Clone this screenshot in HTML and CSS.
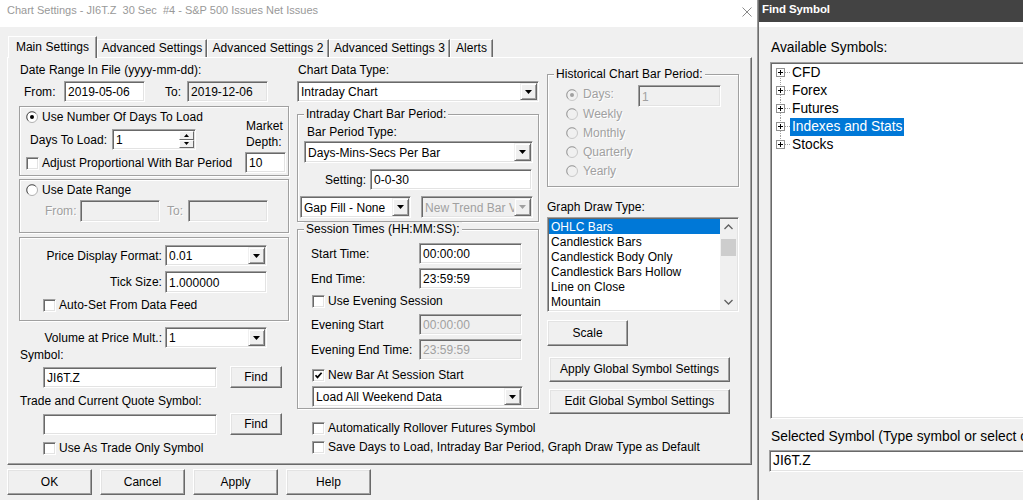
FILE: index.html
```html
<!DOCTYPE html>
<html>
<head>
<meta charset="utf-8">
<link rel="stylesheet" href="styles.css">
</head>
<body>
<div class="dlg">
  <div class="titlebar">
    <span class="ttl">Chart Settings - JI6T.Z  30 Sec  #4 - S&amp;P 500 Issues Net Issues</span>
    <svg class="xbtn" width="10" height="10" viewBox="0 0 10 10"><path d="M0.5 0.5 L9.5 9.5 M9.5 0.5 L0.5 9.5" stroke="#8a8a8a" stroke-width="1" fill="none"/></svg>
  </div>
  <div class="tabs">
    <div class="tab on t1">Main Settings</div>
    <div class="tab t2">Advanced Settings</div>
    <div class="tab t3">Advanced Settings 2</div>
    <div class="tab t4">Advanced Settings 3</div>
    <div class="tab t5">Alerts</div>
  </div>
  <div class="panel">
    <!-- LEFT COLUMN -->
    <div class="lcol">
      <div class="txt ml1">Date Range In File (yyyy-mm-dd):</div>
      <div class="row dates">
        <span class="fromlbl">From:</span><div class="inp w81">2019-05-06</div>
        <span class="tolbl">To:</span><div class="inp dis blk w81">2019-12-06</div>
      </div>
      <div class="grp g1">
        <div class="g1l">
          <div class="cbrow">
            <svg class="rb" width="12" height="12" viewBox="0 0 12 12"><circle cx="6" cy="6" r="5.5" fill="#fff" stroke="#b0b0b0"/><path d="M2.3 9.7 A5.2 5.2 0 0 1 9.7 2.3" fill="none" stroke="#5a5a5a"/><circle cx="6" cy="6" r="2" fill="#000"/></svg>
            <span>Use Number Of Days To Load</span>
          </div>
          <div class="row dtl">
            <span class="dtllbl">Days To Load:</span>
            <div class="inp w84 spinwrap"><span class="val">1</span>
              <div class="spin"><div class="spb"><svg width="5" height="3" viewBox="0 0 5 3"><path d="M2.5 0 L5 3 L0 3Z" fill="#000"/></svg></div><div class="spb"><svg width="5" height="3" viewBox="0 0 5 3"><path d="M0 0 L5 0 L2.5 3Z" fill="#000"/></svg></div></div>
            </div>
          </div>
          <div class="cbrow c1"><span class="cb"></span><span>Adjust Proportional With Bar Period</span></div>
        </div>
        <div class="g1r">
          <div class="lh16">Market</div>
          <div class="lh16">Depth:</div>
          <div class="inp w41 md">10</div>
        </div>
      </div>
      <div class="grp g2">
        <div class="cbrow">
          <svg class="rb" width="12" height="12" viewBox="0 0 12 12"><circle cx="6" cy="6" r="5.5" fill="#fff" stroke="#b0b0b0"/><path d="M2.3 9.7 A5.2 5.2 0 0 1 9.7 2.3" fill="none" stroke="#5a5a5a"/></svg>
          <span>Use Date Range</span>
        </div>
        <div class="row g2r">
          <span class="dtx g2from">From:</span><div class="inp dis w80 h22"></div>
          <span class="dtx g2to">To:</span><div class="inp dis w80 h22"></div>
        </div>
      </div>
      <div class="grp g3">
        <div class="row">
          <span class="rl">Price Display Format:</span>
          <div class="inp sel w102"><span class="val">0.01</span><span class="dd"><svg width="7" height="4" viewBox="0 0 7 4"><path d="M0 0 L7 0 L3.5 4Z" fill="#000"/></svg></span></div>
        </div>
        <div class="row g3b">
          <span class="rl">Tick Size:</span>
          <div class="inp w102 h22">1.000000</div>
        </div>
        <div class="cbrow g3c"><span class="cb"></span><span>Auto-Set From Data Feed</span></div>
      </div>
      <div class="row vap">
        <span class="rl2">Volume at Price Mult.:</span>
        <div class="inp sel w102"><span class="val">1</span><span class="dd"><svg width="7" height="4" viewBox="0 0 7 4"><path d="M0 0 L7 0 L3.5 4Z" fill="#000"/></svg></span></div>
      </div>
      <div class="txt ml1">Symbol:</div>
      <div class="row symrow">
        <div class="inp w174">JI6T.Z</div>
        <div class="btn findbtn">Find</div>
      </div>
      <div class="txt ml1 trlbl">Trade and Current Quote Symbol:</div>
      <div class="row symrow2">
        <div class="inp w174"></div>
        <div class="btn findbtn">Find</div>
      </div>
      <div class="cbrow trchk"><span class="cb"></span><span>Use As Trade Only Symbol</span></div>
    </div>

    <!-- MIDDLE COLUMN -->
    <div class="mcol">
      <div class="txt ml1">Chart Data Type:</div>
      <div class="inp sel w242 cdt"><span class="val">Intraday Chart</span><span class="dd"><svg width="7" height="4" viewBox="0 0 7 4"><path d="M0 0 L7 0 L3.5 4Z" fill="#000"/></svg></span></div>
      <fieldset class="fs fs1">
        <legend>Intraday Chart Bar Period:</legend>
        <div class="txt bpt">Bar Period Type:</div>
        <div class="inp sel w229 h22 bpsel"><span class="val">Days-Mins-Secs Per Bar</span><span class="dd"><svg width="7" height="4" viewBox="0 0 7 4"><path d="M0 0 L7 0 L3.5 4Z" fill="#000"/></svg></span></div>
        <div class="row setrow"><span class="setlbl">Setting:</span><div class="inp w162">0-0-30</div></div>
        <div class="row gaprow">
          <div class="inp sel w111 h22"><span class="val">Gap Fill - None</span><span class="dd"><svg width="7" height="4" viewBox="0 0 7 4"><path d="M0 0 L7 0 L3.5 4Z" fill="#000"/></svg></span></div>
          <div class="inp sel dis w112 h22 ntb"><span class="val">New Trend Bar V</span><span class="dd"><svg width="7" height="4" viewBox="0 0 7 4"><path d="M0 0 L7 0 L3.5 4Z" fill="#a0a0a0"/></svg></span></div>
        </div>
      </fieldset>
      <fieldset class="fs fs2">
        <legend>Session Times (HH:MM:SS):</legend>
        <div class="row strow"><span class="stlbl">Start Time:</span><div class="inp w103">00:00:00</div></div>
        <div class="row strow2"><span class="stlbl">End Time:</span><div class="inp w103">23:59:59</div></div>
        <div class="cbrow evchk"><span class="cb"></span><span>Use Evening Session</span></div>
        <div class="row evrow"><span class="stlbl">Evening Start</span><div class="inp dis w103">00:00:00</div></div>
        <div class="row strow2"><span class="stlbl">Evening End Time:</span><div class="inp dis w103">23:59:59</div></div>
        <div class="cbrow nbchk"><span class="cb"><svg width="9" height="9" viewBox="0 0 9 9"><path d="M1.5 4.2 L3.5 6.4 L7.6 1.8" fill="none" stroke="#000" stroke-width="1.7"/></svg></span><span>New Bar At Session Start</span></div>
        <div class="inp sel w211 lawd"><span class="val">Load All Weekend Data</span><span class="dd"><svg width="7" height="4" viewBox="0 0 7 4"><path d="M0 0 L7 0 L3.5 4Z" fill="#000"/></svg></span></div>
      </fieldset>
      <div class="cbrow arf"><span class="cb"></span><span>Automatically Rollover Futures Symbol</span></div>
      <div class="cbrow sdl"><span class="cb"></span><span>Save Days to Load, Intraday Bar Period, Graph Draw Type as Default</span></div>
    </div>

    <!-- RIGHT COLUMN -->
    <div class="rcol">
      <fieldset class="fs fs3">
        <legend>Historical Chart Bar Period:</legend>
        <div class="hrow hr1">
          <svg class="rb" width="12" height="12" viewBox="0 0 12 12"><circle cx="6" cy="6" r="5.5" fill="#f0f0f0" stroke="#c8c8c8"/><path d="M2.3 9.7 A5.2 5.2 0 0 1 9.7 2.3" fill="none" stroke="#a0a0a0"/><circle cx="6" cy="6" r="2" fill="#a0a0a0"/></svg>
          <span class="dtx hdays">Days:</span>
          <div class="inp dis w83 h22 hinp">1</div>
        </div>
        <div class="hrow"><svg class="rb" width="12" height="12" viewBox="0 0 12 12"><circle cx="6" cy="6" r="5.5" fill="#f0f0f0" stroke="#c8c8c8"/><path d="M2.3 9.7 A5.2 5.2 0 0 1 9.7 2.3" fill="none" stroke="#a0a0a0"/></svg><span class="dtx">Weekly</span></div>
        <div class="hrow"><svg class="rb" width="12" height="12" viewBox="0 0 12 12"><circle cx="6" cy="6" r="5.5" fill="#f0f0f0" stroke="#c8c8c8"/><path d="M2.3 9.7 A5.2 5.2 0 0 1 9.7 2.3" fill="none" stroke="#a0a0a0"/></svg><span class="dtx">Monthly</span></div>
        <div class="hrow"><svg class="rb" width="12" height="12" viewBox="0 0 12 12"><circle cx="6" cy="6" r="5.5" fill="#f0f0f0" stroke="#c8c8c8"/><path d="M2.3 9.7 A5.2 5.2 0 0 1 9.7 2.3" fill="none" stroke="#a0a0a0"/></svg><span class="dtx">Quarterly</span></div>
        <div class="hrow"><svg class="rb" width="12" height="12" viewBox="0 0 12 12"><circle cx="6" cy="6" r="5.5" fill="#f0f0f0" stroke="#c8c8c8"/><path d="M2.3 9.7 A5.2 5.2 0 0 1 9.7 2.3" fill="none" stroke="#a0a0a0"/></svg><span class="dtx">Yearly</span></div>
      </fieldset>
      <div class="txt gdt">Graph Draw Type:</div>
      <div class="lst">
        <div class="items">
          <div class="it on">OHLC Bars</div>
          <div class="it">Candlestick Bars</div>
          <div class="it">Candlestick Body Only</div>
          <div class="it">Candlestick Bars Hollow</div>
          <div class="it">Line on Close</div>
          <div class="it">Mountain</div>
        </div>
        <div class="sb">
          <svg width="17" height="17" viewBox="0 0 17 17"><path d="M4.5 10 L8.5 6 L12.5 10" fill="none" stroke="#606060" stroke-width="1.3"/></svg>
          <div class="thumb"></div>
          <div class="sbgap"></div>
          <svg width="17" height="17" viewBox="0 0 17 17"><path d="M4.5 7 L8.5 11 L12.5 7" fill="none" stroke="#606060" stroke-width="1.3"/></svg>
        </div>
      </div>
      <div class="btn scale">Scale</div>
      <div class="btn glob ag">Apply Global Symbol Settings</div>
      <div class="btn glob eg">Edit Global Symbol Settings</div>
    </div>
  </div>
  <div class="btns">
    <div class="btn bb">OK</div>
    <div class="btn bb">Cancel</div>
    <div class="btn bb">Apply</div>
    <div class="btn bb">Help</div>
  </div>
</div>

<div class="find">
  <div class="fbar">Find Symbol</div>
  <div class="fstrip"></div>
  <div class="fbody">
    <div class="ftxt avail">Available Symbols:</div>
    <div class="tree">
      <div class="trow"><svg width="14" height="18" viewBox="0 0 14 18"><path d="M4.5 14 V18" stroke="#a0a0a0" stroke-dasharray="1 1"/><rect x="0.5" y="4.5" width="8" height="8" fill="#fff" stroke="#919191"/><path d="M2 8.5 H7 M4.5 6 V11" stroke="#000"/><path d="M9 8.5 H14" stroke="#a0a0a0" stroke-dasharray="1 1"/></svg><span class="tl">CFD</span></div>
      <div class="trow"><svg width="14" height="18" viewBox="0 0 14 18"><path d="M4.5 0 V4 M4.5 13 V18" stroke="#a0a0a0" stroke-dasharray="1 1"/><rect x="0.5" y="4.5" width="8" height="8" fill="#fff" stroke="#919191"/><path d="M2 8.5 H7 M4.5 6 V11" stroke="#000"/><path d="M9 8.5 H14" stroke="#a0a0a0" stroke-dasharray="1 1"/></svg><span class="tl">Forex</span></div>
      <div class="trow"><svg width="14" height="18" viewBox="0 0 14 18"><path d="M4.5 0 V4 M4.5 13 V18" stroke="#a0a0a0" stroke-dasharray="1 1"/><rect x="0.5" y="4.5" width="8" height="8" fill="#fff" stroke="#919191"/><path d="M2 8.5 H7 M4.5 6 V11" stroke="#000"/><path d="M9 8.5 H14" stroke="#a0a0a0" stroke-dasharray="1 1"/></svg><span class="tl">Futures</span></div>
      <div class="trow"><svg width="14" height="18" viewBox="0 0 14 18"><path d="M4.5 0 V4 M4.5 13 V18" stroke="#a0a0a0" stroke-dasharray="1 1"/><rect x="0.5" y="4.5" width="8" height="8" fill="#fff" stroke="#919191"/><path d="M2 8.5 H7 M4.5 6 V11" stroke="#000"/><path d="M9 8.5 H14" stroke="#a0a0a0" stroke-dasharray="1 1"/></svg><span class="tl on">Indexes and Stats</span></div>
      <div class="trow"><svg width="14" height="18" viewBox="0 0 14 18"><path d="M4.5 0 V4" stroke="#a0a0a0" stroke-dasharray="1 1"/><rect x="0.5" y="4.5" width="8" height="8" fill="#fff" stroke="#919191"/><path d="M2 8.5 H7 M4.5 6 V11" stroke="#000"/><path d="M9 8.5 H14" stroke="#a0a0a0" stroke-dasharray="1 1"/></svg><span class="tl">Stocks</span></div>
    </div>
    <div class="ftxt selsym">Selected Symbol (Type symbol or select one from the list above):</div>
    <div class="inp finp">JI6T.Z</div>
  </div>
</div>
</body>
</html>
```

FILE: styles.css
```css
* { box-sizing: border-box; margin: 0; padding: 0; }
html, body { width: 1023px; height: 500px; overflow: hidden; }
body {
  font-family: "Liberation Sans", Arial, sans-serif;
  font-size: 12px;
  letter-spacing: 0.04px;
  color: #000;
  background: #f0f0f0;
  display: flex;
}

/* ---------- main dialog ---------- */
.dlg { width: 758px; height: 500px; flex: none; border-right: 1px solid #9a9a9a; }
.titlebar { height: 27px; background: #fff; display: flex; justify-content: space-between; align-items: flex-start; }
.ttl { color: #999; font-size: 11px; letter-spacing: 0; white-space: pre; padding: 3px 0 0 7px; line-height: 14px; }
.xbtn { margin: 7px 5px 0 0; }

.tabs { margin: 9px 0 0 8px; height: 21px; display: flex; align-items: flex-end; }
.tab {
  height: 18px; line-height: 17px; text-align: center; white-space: nowrap;
  border-top: 1px solid #fff; border-left: 1px solid #fff; border-right: 1px solid #696969;
  box-shadow: inset -1px 0 #a0a0a0;
}
.tab.on { height: 22px; line-height: 21px; margin-bottom: -1px; position: relative; z-index: 1; background: #f0f0f0; }
.t1 { width: 89px; } .t2 { width: 110px; } .t3 { width: 122px; } .t4 { width: 121px; } .t5 { width: 43px; }

.panel {
  margin-left: 7px; width: 745px; height: 408px;
  border: 1px solid; border-color: #fff #696969 #696969 #fff;
  box-shadow: inset -1px -1px #a0a0a0;
  padding: 5px 0 0 11px;
  display: flex;
}

.lcol { width: 270px; flex: none; display: flex; flex-direction: column; }
.mcol { width: 242px; flex: none; margin-left: 8px; display: flex; flex-direction: column; }
.rcol { width: 192px; flex: none; margin-left: 8px; display: flex; flex-direction: column; }

.txt { height: 14px; line-height: 14px; white-space: nowrap; }
.lh16 { height: 16px; line-height: 16px; white-space: nowrap; padding-left: 1px; }
.ml1 { margin-left: 1px; }
.row { display: flex; align-items: center; white-space: nowrap; flex: none; }
.cbrow { display: flex; align-items: center; height: 14px; white-space: nowrap; flex: none; }
.dtx { color: #a0a0a0; text-shadow: 1px 1px #fff; }

/* inputs */
.inp {
  height: 21px; flex: none; background: #fff;
  border: 1px solid; border-color: #a0a0a0 #fff #fff #a0a0a0;
  box-shadow: inset 1px 1px #696969, inset -1px -1px #e3e3e3;
  padding: 1px 2px 0 3px; line-height: 19px; white-space: nowrap; overflow: hidden;
}
.inp.dis { background: #f0f0f0; color: #a0a0a0; }
.inp.dis.blk { color: #000; }
.h22 { height: 22px; line-height: 20px; }
.sel { display: flex; padding: 0; padding-left: 3px; }
.sel .val { flex: 1; overflow: hidden; padding-top: 1px; }
.dd {
  width: 17px; flex: none; margin: 1px 1px 1px 0;
  background: #f0f0f0; border: 1px solid; border-color: #f0f0f0 #696969 #696969 #f0f0f0;
  box-shadow: inset 1px 1px #fff, inset -1px -1px #a0a0a0;
  display: flex; align-items: center; justify-content: center;
}
.dd svg { display: block; }

.w41 { width: 41px; } .w80 { width: 80px; } .w81 { width: 81px; } .w83 { width: 83px; } .w84 { width: 84px; }
.w102 { width: 102px; } .w103 { width: 103px; } .w111 { width: 111px; } .w112 { width: 112px; }
.w162 { width: 162px; } .w174 { width: 174px; } .w211 { width: 211px; } .w229 { width: 229px; } .w242 { width: 242px; }

/* check / radio */
.cb {
  width: 13px; height: 13px; flex: none; margin-right: 3px; background: #fff;
  border: 1px solid; border-color: #a0a0a0 #fff #fff #a0a0a0;
  box-shadow: inset 1px 1px #696969, inset -1px -1px #e3e3e3;
  display: flex; align-items: center; justify-content: center;
}
.cb svg { display: block; }
.rb { flex: none; margin-right: 4px; display: block; }

/* buttons */
.btn {
  flex: none; background: #f0f0f0; text-align: center; white-space: nowrap;
  border: 1px solid; border-color: #fff #696969 #696969 #fff;
  box-shadow: inset -1px -1px #a0a0a0, inset 1px 1px #e3e3e3;
}

/* group boxes */
.grp { border: 1px solid #a0a0a0; box-shadow: inset 1px 1px #fff, 1px 1px #fff; flex: none; }
.fs { border: 1px solid #a0a0a0; box-shadow: inset 1px 1px #fff, 1px 1px #fff; padding: 0; min-width: 0; }
.fs legend { margin-left: 6px; padding: 0 2px; line-height: 14px; height: 14px; background: #f0f0f0; position: relative; white-space: nowrap; }

/* left column */
.dates { margin-top: 4px; height: 21px; }
.fromlbl { margin-left: 5px; width: 40px; }
.tolbl { margin-left: 20px; width: 22px; }

.g1 { margin-top: 4px; height: 70px; display: flex; padding-left: 6px; }
.g1l { padding-top: 3px; display: flex; flex-direction: column; }
.dtl { margin-top: 5px; height: 21px; }
.dtllbl { margin-left: 4px; width: 82px; }
.spinwrap { display: flex; padding: 0 1px 0 3px; }
.spinwrap .val { flex: 1; padding-top: 1px; }
.spin { display: flex; flex-direction: column; width: 15px; margin: 1px 0 1px 0; }
.spb {
  flex: 1; background: #f0f0f0; border: 1px solid; border-color: #fff #696969 #696969 #fff;
  display: flex; align-items: center; justify-content: center;
}
.spb svg { display: block; }
.c1 { margin-top: 6px; }
.g1r { margin-left: auto; margin-right: 2px; width: 41px; padding-top: 11px; display: flex; flex-direction: column; }
.md { margin-top: 2px; }

.g2 { margin-top: 3px; height: 54px; padding: 3px 0 0 6px; }
.g2r { margin-top: 3px; height: 22px; }
.g2from { margin-left: 19px; width: 35px; }
.g2to { margin-left: 7px; width: 21px; }

.g3 { margin-top: 4px; height: 84px; padding-top: 7px; }
.rl { width: 145px; text-align: right; padding-right: 3px; }
.g3b { margin-top: 5px; }
.g3c { margin-top: 5px; padding-left: 23px; }

.vap { margin-top: 6px; }
.rl2 { width: 146px; text-align: right; padding-right: 3px; }

.symrow { margin-top: 4px; height: 22px; }
.symrow .inp, .symrow2 .inp { margin-left: 24px; }
.findbtn { margin-left: 13px; width: 52px; height: 22px; line-height: 20px; }
.trlbl { margin-top: 6px; }
.symrow2 { margin-top: 5px; height: 22px; }
.trchk { margin-top: 6px; padding-left: 24px; }

/* middle column */
.cdt { margin-top: 4px; }
.fs1 { margin-top: 5px; padding-bottom: 3px; }
.bpt { margin-top: 4px; margin-left: 9px; }
.bpsel { margin-top: 2px; margin-left: 6px; }
.setrow { margin-top: 6px; }
.setlbl { margin-left: 27px; width: 45px; }
.gaprow { margin-top: 6px; }
.gaprow .inp:first-child { margin-left: 2px; }
.ntb { margin-left: 10px; }

.fs2 { margin-top: 0; padding-bottom: 1px; }
.strow { margin-top: 7px; }
.strow2 { margin-top: 4px; }
.stlbl { margin-left: 13px; width: 108px; }
.evchk { margin-top: 5px; padding-left: 14px; }
.evrow { margin-top: 6px; }
.nbchk { margin-top: 8px; padding-left: 14px; }
.lawd { margin-top: 4px; margin-left: 14px; }
.arf { margin-top: 12px; padding-left: 15px; }
.sdl { margin-top: 5px; padding-left: 15px; }

/* right column */
.fs3 { margin-top: 4px; padding-bottom: 6px; }
.hrow { height: 19px; display: flex; align-items: center; padding-left: 18px; white-space: nowrap; }
.hrow .rb { margin-right: 5px; }
.hr1 { margin-top: 4px; align-items: flex-start; }
.hr1 .rb { margin-top: 4px; }
.hr1 .hdays { line-height: 19px; width: 55px; }
.gdt { margin-top: 13px; }
.lst {
  margin-top: 3px; height: 95px; width: 192px; background: #fff; display: flex;
  border: 1px solid; border-color: #a0a0a0 #fff #fff #a0a0a0;
  box-shadow: inset 1px 1px #696969, inset -1px -1px #e3e3e3;
  padding: 1px;
}
.items { flex: 1; }
.it { height: 15px; line-height: 14px; padding: 1px 0 0 2px; white-space: nowrap; }
.it.on { background: #0078d7; color: #fff; }
.sb { width: 17px; background: #f0f0f0; display: flex; flex-direction: column; }
.sb svg { display: block; flex: none; }
.thumb { margin: 3px 1px 0 1px; height: 17px; background: #cdcdcd; flex: none; }
.sbgap { flex: 1; }
.scale { margin-top: 8px; width: 81px; height: 26px; line-height: 24px; }
.glob { margin-left: 2px; width: 181px; height: 25px; line-height: 23px; }
.ag { margin-top: 11px; }
.eg { margin-top: 7px; }

.btns { margin: 4px 0 0 7px; display: flex; gap: 8px; }
.bb { width: 85px; height: 26px; line-height: 24px; }

/* ---------- find symbol window ---------- */
.find { flex: 1; min-width: 0; display: flex; flex-direction: column; background: #f0f0f0; overflow: hidden; border-left: 1px solid #6e6e6e; }
.fbar { height: 22px; background: #434343; color: #fff; font-weight: bold; font-size: 11.5px; letter-spacing: -0.1px; padding-left: 3px; line-height: 19px; flex: none; }
.fstrip { height: 5px; background: #fff; flex: none; }
.fbody { padding-left: 12px; font-size: 13.8px; letter-spacing: 0; white-space: nowrap; }
.ftxt { height: 16px; line-height: 16px; }
.avail { margin-top: 13px; }
.tree {
  margin-top: 6px; margin-left: -1px; width: 300px; height: 357px; background: #fff;
  border: 1px solid; border-color: #a0a0a0 #fff #fff #a0a0a0;
  box-shadow: inset 1px 1px #696969, inset -1px -1px #e3e3e3;
  padding: 1px 0 0 5px;
}
.trow { height: 18px; display: flex; align-items: center; }
.trow svg { display: block; flex: none; }
.tl { padding: 0 2px; line-height: 18px; height: 18px; }
.tl.on { background: #0078d7; color: #fff; }
.selsym { margin-top: 10px; }
.finp { margin-top: 5px; margin-left: -2px; width: 300px; height: 22px; line-height: 20px; padding-top: 0; }
```
